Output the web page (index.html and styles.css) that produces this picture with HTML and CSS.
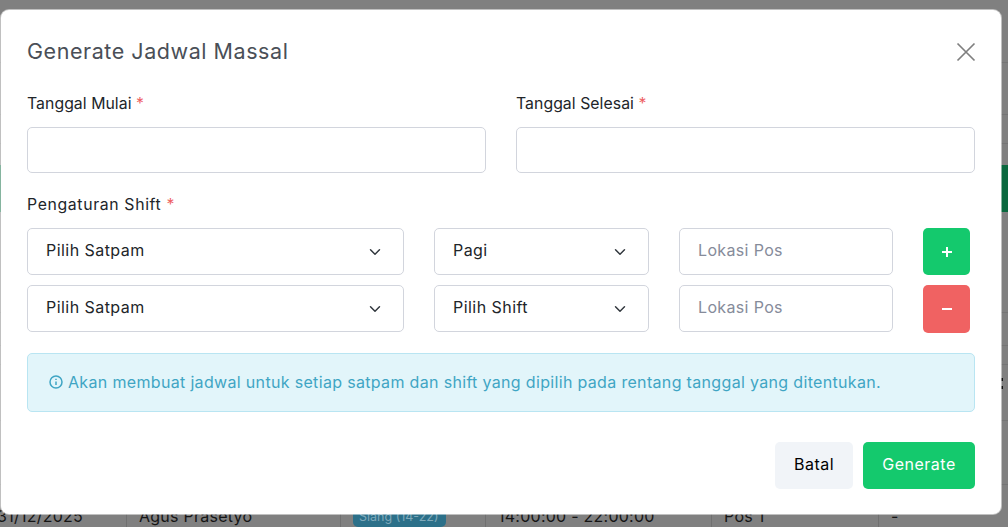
FILE: index.html
```html
<!DOCTYPE html>
<html lang="id">
<head>
<meta charset="utf-8">
<title>Generate Jadwal Massal</title>
<link rel="stylesheet" href="styles.css">
</head>
<body>
<div class="page">
  <div class="bg-lines">
    <div class="line l1"></div>
    <div class="line l2"></div>
    <div class="line l3"></div>
    <div class="green"></div>
    <div class="line l4"></div>
    <div class="line l5"></div>
    <div class="line l6"></div>
    <div class="line l7"></div>
    <div class="line l8"></div>
  </div>
  <div class="bg-row">
    <div class="cell c1">31/12/2025</div>
    <div class="cell c2">Agus Prasetyo</div>
    <div class="cell c3"><span class="badge">Siang (14-22)</span></div>
    <div class="cell c4">14:00:00 - 22:00:00</div>
    <div class="cell c5">Pos 1</div>
    <div class="cell c6">-</div>
  </div>
  <div class="bg-dots"></div>

  <div class="modal">
    <header class="modal-head">
      <h2 class="modal-title">Generate Jadwal Massal</h2>
      <svg class="close" width="20" height="20" viewBox="0 0 20 20" aria-label="Tutup"><path d="M1.5 1.5l17 17M18.5 1.5l-17 17"/></svg>
    </header>
    <div class="dates">
      <div class="field">
        <label class="label">Tanggal Mulai <span class="req">*</span></label>
        <input class="control" type="text">
      </div>
      <div class="field">
        <label class="label">Tanggal Selesai <span class="req">*</span></label>
        <input class="control" type="text">
      </div>
    </div>
    <label class="label shift-label">Pengaturan Shift <span class="req">*</span></label>
    <div class="shift-grid">
      <select class="control select"><option>Pilih Satpam</option></select>
      <select class="control select"><option>Pagi</option></select>
      <input class="control" type="text" placeholder="Lokasi Pos">
      <button class="btn-icon add" type="button"><svg width="12" height="12" viewBox="0 0 12 12"><path d="M6 1v10M1 6h10"/></svg></button>
      <select class="control select"><option>Pilih Satpam</option></select>
      <select class="control select"><option>Pilih Shift</option></select>
      <input class="control" type="text" placeholder="Lokasi Pos">
      <button class="btn-icon remove" type="button"><svg width="12" height="12" viewBox="0 0 12 12"><path d="M1 6h10"/></svg></button>
    </div>
    <div class="alert">
      <svg class="info" width="14" height="14" viewBox="0 0 14 14"><circle cx="7" cy="7" r="6"/><path d="M7 6.4v3.6M7 3.8v1.2"/></svg>
      <span>Akan membuat jadwal untuk setiap satpam dan shift yang dipilih pada rentang tanggal yang ditentukan.</span>
    </div>
    <footer class="modal-foot">
      <button class="btn cancel" type="button">Batal</button>
      <button class="btn generate" type="button">Generate</button>
    </footer>
  </div>
</div>
</body>
</html>
```

FILE: styles.css
```css
* { box-sizing: border-box; }
html, body { margin: 0; height: 100%; }
body { font-family: "Inter", "Liberation Sans", sans-serif; font-size: 16px; color: #212529; overflow: hidden; }

.page { position: relative; width: 1008px; height: 527px; background: #808080; overflow: hidden; display: flex; flex-direction: column; }

.bg-lines { height: 502px; flex: none; display: flex; flex-direction: column; align-items: stretch; }
.line { border-bottom: 1px solid #757575; }
.l1 { height: 63px; }
.l2 { height: 52px; }
.l3 { height: 29px; }
.green { height: 47px; margin-top: 21px; background: #0a683e; }
.l4 { height: 101px; }
.l5 { height: 33px; }
.l6 { height: 19px; }
.l7 { height: 56px; }
.l8 { height: 64px; }

.bg-row { flex: 1; display: grid; grid-template-columns: 126px 214px 145px 226px 167px 1fr; color: #151515; font-size: 16px; letter-spacing: .25px; }
.cell { padding: 0 12px; border-left: 1px solid #707070; line-height: 28px; white-space: nowrap; }
.c1 { border-left: 0; padding-left: 0; margin-left: -3px; }
.badge { display: inline-block; background: #2c7089; color: #7fa9ba; border-radius: 5px; padding: 0 7px 0 6px; font-size: 12.5px; line-height: 30px; height: 25px; letter-spacing: 0; vertical-align: top; }
.bg-dots { position: absolute; left: 1001px; top: 378px; width: 2px; height: 11px; background: linear-gradient(#111 0 3px, transparent 3px 8px, #111 8px); }

.modal { position: absolute; left: 1px; top: 10px; width: 1000px; height: 504px; background: #fff; border-radius: 8px; padding: 26px; box-shadow: 0 0 0 1px rgba(255,255,255,.5); }

.modal-head { display: flex; justify-content: space-between; align-items: center; height: 30px; }
.modal-title { margin: -1px 0 0; font-weight: 400; font-size: 21.5px; letter-spacing: .55px; line-height: 28px; color: #4a4f57; }
.close { margin: 1px -1px 0 0; fill: none; stroke: #7f7f7f; stroke-width: 1.7; }

.dates { display: grid; grid-template-columns: 459px 459px; gap: 30px; margin-top: 26px; }
.field { display: flex; flex-direction: column; }
.label { display: block; height: 35px; line-height: 24px; font-size: 15.8px; letter-spacing: .05px; }
.req { color: #ee5f63; }

.control { height: 46px; width: 100%; border: 1px solid #d2d5dd; border-radius: 5px; background: #fff; padding: 0 18px 4px; font: inherit; letter-spacing: .35px; color: #212529; }
.control::placeholder { color: #868b9a; opacity: 1; }
.select { appearance: none; -webkit-appearance: none; letter-spacing: .45px; background-image: url("data:image/svg+xml,%3csvg xmlns='http://www.w3.org/2000/svg' viewBox='0 0 16 16'%3e%3cpath fill='none' stroke='%23343a40' stroke-linecap='round' stroke-linejoin='round' stroke-width='2' d='m2 5 6 6 6-6'/%3e%3c/svg%3e"); background-repeat: no-repeat; background-position: right 20px center; background-size: 16px 12px; }

.shift-label { margin-top: 18px; height: 37px; line-height: 27px; letter-spacing: .65px; }

.shift-grid { display: grid; grid-template-columns: 377px 215px 214px 47px; column-gap: 30px; row-gap: 10px; grid-auto-rows: 47px; }
.shift-grid .control { height: 47px; }

.btn-icon { border: 0; border-radius: 5px; padding: 0; display: flex; align-items: center; justify-content: center; height: 47px; }
.btn-icon svg { fill: none; stroke: #fff; stroke-width: 2; }
.add { background: #14c96d; }
.remove { background: #f06262; height: 48px; }

.alert { margin-top: 21px; height: 59px; background: #e2f5fa; border: 1px solid #b9e5f2; border-radius: 5px; padding: 0 21px 1px; display: flex; align-items: center; gap: 5px; color: #3fa5c4; font-size: 16px; letter-spacing: .33px; white-space: nowrap; }
.info { flex: none; fill: none; stroke: #3fa5c4; stroke-width: 1.5; }

.modal-foot { margin-top: 30px; display: flex; justify-content: flex-end; gap: 10px; }
.btn { border: 0; border-radius: 5px; height: 47px; padding: 0 0 4px; font: inherit; letter-spacing: .5px; cursor: pointer; }
.cancel { width: 78px; background: #f1f4f8; color: #000; }
.generate { width: 112px; background: #14c96d; color: #fff; }
```
